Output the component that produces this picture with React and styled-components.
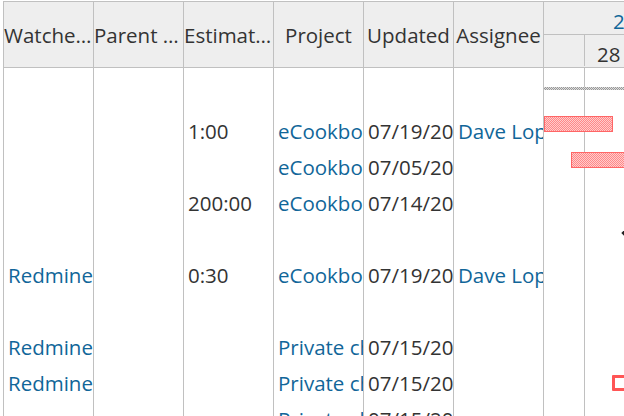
import React from 'react'
import styled, { createGlobalStyle } from 'styled-components'

const GlobalStyle = createGlobalStyle`
  html, body {
    margin: 0;
    padding: 0;
    overflow: hidden;
    background: #fff;
  }
  body {
    font-family: "Open Sans", "Noto Sans", "Liberation Sans", sans-serif;
    font-size: 20.5px;
    color: #333;
  }
`

const LINE = '#c0c0c0'
const COL_WIDTH = 90

const Page = styled.div`
  padding: 1px 0 0 3px;
`

const Table = styled.div`
  display: flex;
  flex-direction: column;
  border-top: 1px solid ${LINE};
  border-left: 1px solid ${LINE};
`

const HeaderRow = styled.div`
  display: flex;
  height: 65px;
  background: #eee;
  border-bottom: 1px solid ${LINE};
`

const HeaderCell = styled.div`
  flex: 0 0 ${COL_WIDTH}px;
  box-sizing: border-box;
  border-right: 1px solid ${LINE};
  padding: 0;
  line-height: 66px;
  text-align: center;
  white-space: nowrap;
  overflow: hidden;
  text-overflow: ellipsis;
`

const GanttHeader = styled.div`
  flex: 1;
  min-width: 0;
  display: flex;
  flex-direction: column;
`

const MonthRow = styled.div`
  height: 33px;
  box-sizing: border-box;
  padding: 9px 0 0 69px;
  line-height: 20px;
  border-bottom: 1px solid ${LINE};
  white-space: nowrap;
  overflow: hidden;
`

const WeekRow = styled.div`
  display: flex;
  height: 31px;
`

const WeekCell = styled.div`
  flex: 0 0 ${(p) => p.$width}px;
  box-sizing: border-box;
  padding: 9px 0 0 12px;
  line-height: 20px;
  border-right: 1px solid ${LINE};
  white-space: nowrap;
  overflow: hidden;
`

const Link = styled.a`
  color: #169;
  text-decoration: none;
`

const Row = styled.div`
  display: flex;
  height: ${(p) => p.$height}px;
`

const Cell = styled.div`
  flex: 0 0 ${COL_WIDTH}px;
  box-sizing: border-box;
  border-right: 1px solid ${LINE};
  padding: 0 4px;
  line-height: 36px;
  white-space: nowrap;
  overflow: hidden;
`

// gantt area of a row: the week separator is drawn as a 1px stripe at 40px
const GanttCell = styled.div`
  flex: 1;
  min-width: 0;
  position: relative;
  overflow: hidden;
  background: linear-gradient(
    to right,
    transparent 40px,
    ${LINE} 40px,
    ${LINE} 41px,
    transparent 41px
  );
`

const ProjectLine = styled.div`
  position: absolute;
  left: 0;
  right: 0;
  top: 19px;
  height: 3px;
  background: repeating-conic-gradient(#999 0 25%, #ddd 0 50%) 0 0 / 2px 2px;
`

const TaskBar = styled.div`
  position: absolute;
  top: 3px;
  height: 16px;
  box-sizing: border-box;
  border: 1px solid #f66;
  background: repeating-conic-gradient(#f88 0 25%, #fcc 0 50%) 0 0 / 2px 2px;
`

const ClosedTask = styled.div`
  position: absolute;
  top: 10px;
  width: 40px;
  height: 16px;
  box-sizing: border-box;
  border: 3px solid #f55;
  border-radius: 1px;
  background: #fff;
`

const Milestone = styled.div`
  position: absolute;
  top: 8px;
  width: 8px;
  height: 8px;
  background: #222;
  transform: translateX(2px) rotate(45deg);
`

const columns = ['Watchers', 'Parent task', 'Estimated time', 'Project', 'Updated', 'Assignee']

const rows = [
  { height: 45, gantt: { kind: 'project' } },
  {
    est: '1:00',
    project: 'eCookbook',
    updated: '07/19/2020 09:58 AM',
    assignee: 'Dave Lopper',
    gantt: { kind: 'bar', left: 0, width: 69 },
  },
  {
    project: 'eCookbook',
    updated: '07/05/2020 02:11 PM',
    gantt: { kind: 'bar', left: 27, width: 140 },
  },
  { est: '200:00', project: 'eCookbook', updated: '07/14/2020 11:40 AM' },
  { gantt: { kind: 'milestone', left: 77 } },
  {
    watchers: 'Redmine Admin',
    est: '0:30',
    project: 'eCookbook',
    updated: '07/19/2020 10:02 AM',
    assignee: 'Dave Lopper',
  },
  {},
  { watchers: 'Redmine Admin', project: 'Private child of eCookbook', updated: '07/15/2020 08:20 AM' },
  {
    watchers: 'Redmine Admin',
    project: 'Private child of eCookbook',
    updated: '07/15/2020 08:21 AM',
    gantt: { kind: 'closed', left: 68 },
  },
  { project: 'Private child of eCookbook', updated: '07/15/2020 08:25 AM' },
]

function GanttMark({ item }) {
  if (!item) return null
  if (item.kind === 'project') return <ProjectLine />
  if (item.kind === 'bar') return <TaskBar style={{ left: item.left, width: item.width }} />
  if (item.kind === 'closed') return <ClosedTask style={{ left: item.left }} />
  if (item.kind === 'milestone') return <Milestone style={{ left: item.left }} />
  return null
}

export default function App() {
  return (
    <Page>
      <GlobalStyle />
      <Table>
        <HeaderRow>
          {columns.map((c) => (
            <HeaderCell key={c}>{c}</HeaderCell>
          ))}
          <GanttHeader>
            <MonthRow>
              <Link href="#">2020-7</Link>
            </MonthRow>
            <WeekRow>
              <WeekCell $width={41} />
              <WeekCell $width={287}>28</WeekCell>
            </WeekRow>
          </GanttHeader>
        </HeaderRow>

        {rows.map((r, i) => (
          <Row key={i} $height={r.height || 36}>
            <Cell>{r.watchers && <Link href="#">{r.watchers}</Link>}</Cell>
            <Cell />
            <Cell>{r.est}</Cell>
            <Cell>{r.project && <Link href="#">{r.project}</Link>}</Cell>
            <Cell>{r.updated}</Cell>
            <Cell>{r.assignee && <Link href="#">{r.assignee}</Link>}</Cell>
            <GanttCell>
              <GanttMark item={r.gantt} />
            </GanttCell>
          </Row>
        ))}
      </Table>
    </Page>
  )
}
